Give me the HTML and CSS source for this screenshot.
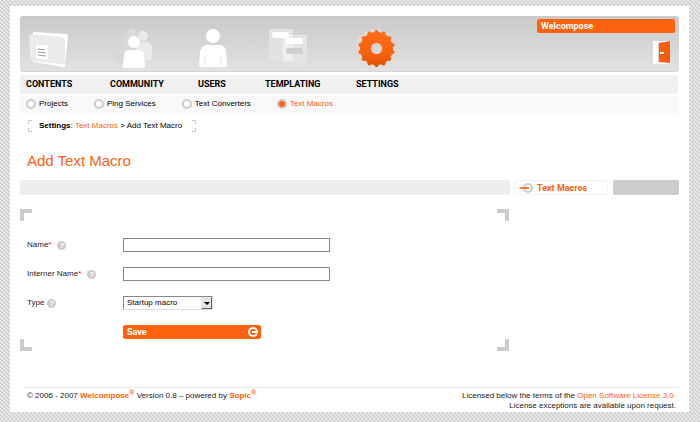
FILE: index.html
```html
<!DOCTYPE html>
<html lang="en">
<head>
<meta charset="utf-8">
<title>Welcompose – Add Text Macro</title>
<link rel="stylesheet" href="styles.css">
</head>
<body>
<div class="page">
  <header>
    <div class="banner">
      <div class="icons" aria-hidden="true">
        <svg class="icon" width="44" height="42" viewBox="0 0 44 42">
          <path d="M7 3l33 2q2 0 2 3l-3 28q0 3-3 2L7 33z" fill="#fff"/>
          <path d="M5 5l30 3q4 1 4 4v21q0 3-3 2L6 32q-2-1-2-3L3 7q0-2 2-2z" fill="#ebebeb"/>
          <path d="M10 16h12v14l-12-1z" fill="#fff"/>
          <path d="M12 20l7 1m-7 2l8 1m-8 2l8 1" stroke="#999" fill="none"/>
        </svg>
        <svg class="icon" width="44" height="42" viewBox="0 0 44 42">
          <g fill="#d8d8d8"><circle cx="14" cy="11" r="5"/><path d="M5 34V23q0-5 5-5h7v16z"/></g>
          <g fill="#dcdcdc"><circle cx="22" cy="5" r="5"/><path d="M17 10h10v9H17z"/></g>
          <g fill="#ebebeb"><circle cx="33" cy="7" r="5"/><path d="M26 31V18q1-5 5-5h5q6 0 6 7v9q0 2-3 2z"/></g>
          <g fill="#fff"><circle cx="24" cy="13" r="6"/><path d="M14 39q-2 0-1-3l1-10q1-5 5-5h10q5 0 5 5l1 10q0 3-2 3z"/></g>
        </svg>
        <svg class="icon" width="32" height="42" viewBox="0 0 32 42">
          <g fill="#fff"><ellipse cx="15" cy="7" rx="7" ry="7"/><path d="M3 38q-2 0-2-3l1-12q1-6 7-7h12q7 1 7 7l1 12q0 3-2 3z"/></g>
          <path d="M7 37V28m16 9V28" stroke="#e6e6e6" fill="none"/>
        </svg>
        <svg class="icon" width="44" height="42" viewBox="0 0 44 42">
          <rect x="4" y="0" width="24" height="32" rx="1" fill="#e2e2e2"/>
          <rect x="18" y="6" width="24" height="31" rx="1" fill="#e4e4e4"/>
          <path d="M18 6h10v26H18z" fill="#efefef"/>
          <rect x="7" y="3" width="17" height="6" rx="2" fill="#fff"/>
          <rect x="21" y="9" width="17" height="6" rx="2" fill="#fff"/>
          <rect x="21" y="19" width="17" height="6" rx="2" fill="#cfcfcf"/>
        </svg>
        <svg class="icon" width="44" height="42" viewBox="0 0 44 42">
          <defs><linearGradient id="gear" gradientUnits="userSpaceOnUse" x1="0" y1="1" x2="0" y2="38"><stop offset="0" stop-color="#ff6a1a"/><stop offset="0.600" stop-color="#fa640f"/><stop offset="1" stop-color="#dd5008"/></linearGradient></defs>
          <g fill="none" stroke="#dedede"><circle cx="18" cy="17" r="12" stroke-width="8"/><circle cx="18" cy="17" r="16" stroke-width="4" pathLength="42" stroke-dasharray="1 2"/></g>
          <g fill="none" stroke="url(#gear)">
            <circle cx="20.500" cy="19.500" r="11" stroke-width="11"/>
            <circle cx="20.500" cy="19.500" r="16.500" stroke-width="4" stroke-linecap="round" pathLength="140" stroke-dasharray="0.100 9.900" stroke-dashoffset="5" />
          </g>
        </svg>
      </div>
      <div class="account">
        <div class="project strong">Welcompose</div>
        <a class="logout" href="#" aria-label="Log out">
          <svg width="18" height="23" viewBox="0 0 18 23"><path fill="#fff" d="M0 0h17v23H0z"/><path fill="#d9d9d9" d="M5 1h1v21H5z"/><path fill="#fa5c08" d="M6 2l11-2v22L6 21z"/><path fill="#fff" d="M7 11h4v2H7z"/></svg>
        </a>
      </div>
    </div>
    <nav class="tabs strong" aria-label="Sections">
      <a href="#">CONTENTS</a><a href="#">COMMUNITY</a><a href="#">USERS</a><a href="#">TEMPLATING</a><a href="#">SETTINGS</a>
    </nav>
    <nav class="subnav" aria-label="Settings">
      <a href="#">Projects</a><a href="#">Ping Services</a><a href="#">Text Converters</a><a class="current" href="#">Text Macros</a>
    </nav>
  </header>

  <div class="crumbs corners"><strong>Settings</strong>: <a href="#">Text Macros</a> &gt; Add Text Macro</div>

  <main>
    <h1>Add Text Macro</h1>
    <div class="bar">
      <div class="bar-main"></div>
      <a class="bar-link strong" href="#">
        <svg width="13" height="11" viewBox="0 0 13 11" aria-hidden="true"><circle cx="8" cy="6" r="4" fill="none" stroke="#ccc" stroke-width="2"/><path d="M0 5h9v2H0z" fill="#ff7a33"/></svg>
        Text Macros
      </a>
      <div class="bar-end"></div>
    </div>

    <form class="corners frame">
      <div class="row">
        <div class="label"><label for="name">Name<span class="req">*</span></label><button type="button" class="help" aria-label="Help on name">?</button></div>
        <input id="name" type="text">
      </div>
      <div class="row">
        <div class="label"><label for="internal">Interner Name<span class="req">*</span></label><button type="button" class="help" aria-label="Help on internal name">?</button></div>
        <input id="internal" type="text">
      </div>
      <div class="row">
        <div class="label tight"><label for="type">Type</label><button type="button" class="help" aria-label="Help on type">?</button></div>
        <div class="select">
          <select id="type"><option>Startup macro</option></select>
          <span class="arrow" aria-hidden="true"></span>
        </div>
      </div>
      <div class="row">
        <button class="save strong" type="submit">Save
          <svg width="10" height="10" viewBox="0 0 10 10" aria-hidden="true"><circle cx="5" cy="5" r="4" fill="none" stroke="#fff" stroke-width="2"/><path d="M4 5h6" stroke="#fff" stroke-width="2"/><path d="M8 6h2v2z" fill="#ff620d"/></svg>
        </button>
      </div>
    </form>
  </main>

  <footer>
    <p>© 2006 - 2007 <a class="brand" href="#">Welcompose<sup>®</sup></a> Version 0.8 – powered by <a class="brand" href="#">Sopic<sup>®</sup></a></p>
    <p class="license">Licensed below the terms of the <a href="#">Open Software License 3.0</a>&nbsp;<br>License exceptions are available upon request.</p>
  </footer>
</div>
</body>
</html>
```

FILE: styles.css
```css
*, *::before { box-sizing: border-box; }

body {
  margin: 0;
  padding: 6px 11px 10px 10px;
  font: 8px/10px "Liberation Sans", Arial, sans-serif;
  color: #222;
  background: linear-gradient(45deg, #d2d2d2 25%, #e8e8e8 25% 50%, #d2d2d2 50% 75%, #e8e8e8 75%) 0 0 / 4px 4px;
}

a { color: #ff620d; text-decoration: none; }
p { margin: 0; }
button, input, select { font: inherit; margin: 0; padding: 0; border: 0; }

.strong { font: bold 9px/10px Roboto, "Liberation Sans", sans-serif; }

.page { padding: 10px 10px 0; background: #fff; }

/* Header */
.banner {
  display: flex;
  justify-content: space-between;
  height: 56px;
  padding: 3px 4px 0 6px;
  border-radius: 3px;
  border-bottom: 1px solid #d4d4d4;
  background: linear-gradient(#c9c9c9, #e2e2e2);
}
.icons, .tabs {
  display: grid;
  grid-template-columns: 84px 88px 67px 91px auto;
}
.icons { align-content: end; }
.icon { display: block; }
.account { display: flex; flex-direction: column; align-items: flex-end; gap: 8px; }
.project {
  width: 138px;
  padding: 2px 4px;
  border-radius: 2px;
  background: #ff620d;
  color: #fff;
}
.logout { padding-right: 4px; }
.logout svg { display: block; }

.tabs {
  margin: 3px 1px 0 0;
  padding: 4px 6px 5px;
  border-radius: 2px;
  background: #f0f0f0;
}
.tabs a { color: #000; }

.subnav {
  display: flex;
  gap: 26px;
  margin-top: 2px;
  padding: 3px 6px 4px;
  background: #f8f8f8;
}
.subnav a { display: flex; align-items: center; gap: 3px; color: #000; }
.subnav a::before {
  content: "";
  width: 10px;
  height: 10px;
  border: 2px solid #ccc;
  border-radius: 50%;
  background: #fff;
}
.subnav a.current { color: #ff620d; }
.subnav a.current::before { background: #ff620d; }

/* Boxes marked by four corner brackets */
.corners {
  --c: #ccc;
  --len: 4px;
  --w: 1px;
  background:
    linear-gradient(var(--c) 0 0) 0 0 / var(--len) var(--w),
    linear-gradient(var(--c) 0 0) 0 0 / var(--w) var(--len),
    linear-gradient(var(--c) 0 0) 100% 0 / var(--len) var(--w),
    linear-gradient(var(--c) 0 0) 100% 0 / var(--w) var(--len),
    linear-gradient(var(--c) 0 0) 0 100% / var(--len) var(--w),
    linear-gradient(var(--c) 0 0) 0 100% / var(--w) var(--len),
    linear-gradient(var(--c) 0 0) 100% 100% / var(--len) var(--w),
    linear-gradient(var(--c) 0 0) 100% 100% / var(--w) var(--len);
  background-repeat: no-repeat;
}

.crumbs {
  width: fit-content;
  margin: 7px 0 0 8px;
  padding: 1px 14px 1px 11px;
  color: #000;
}

/* Content */
h1 {
  margin: 19px 7px 10px;
  font-size: 15px;
  font-weight: normal;
  line-height: 19px;
  color: #ff620d;
}
.bar {
  display: grid;
  grid-template-columns: 1fr 93px 66px;
  gap: 5px;
  height: 15px;
}
.bar-main, .bar-end, .bar-link { border-radius: 2px; }
.bar-main { background: #eee; }
.bar-end { background: #ccc; }
.bar-link {
  display: flex;
  align-items: center;
  gap: 4px;
  padding-left: 4px;
  border: 1px solid #f2f2f2;
}

.frame {
  --len: 12px;
  --w: 4px;
  display: grid;
  gap: 15px;
  margin: 14px 170px 0 0;
  padding: 29px 7px 12px;
}
.row { display: grid; grid-template-columns: 96px 1fr; align-items: center; }
.label { display: flex; align-items: center; gap: 6px; }
.label.tight { gap: 3px; }
.req { color: #f00; }
.help {
  width: 9px;
  height: 9px;
  border-radius: 50%;
  background: #ccc;
  color: #fff;
  font-weight: bold;
  line-height: 9px;
  text-align: center;
}
input {
  width: 207px;
  height: 14px;
  padding: 0 3px;
  border: 1px solid #888;
  background: #fff;
}
.select {
  display: flex;
  align-items: stretch;
  width: 90px;
  height: 14px;
  border: 1px solid;
  border-color: #888 #ddd #ddd #888;
}
select {
  flex: 1;
  padding-left: 3px;
  appearance: none;
  background: #fff;
  color: #000;
}
.arrow {
  display: grid;
  place-items: center;
  width: 11px;
  border: 1px solid;
  border-color: #eee #666 #666 #eee;
  background: #e4e4e4;
  pointer-events: none;
}
.arrow::before {
  content: "";
  border: 3px solid transparent;
  border-top-color: #000;
  border-bottom: 0;
}
.save {
  grid-column: 2;
  display: flex;
  align-items: center;
  justify-content: space-between;
  width: 138px;
  height: 14px;
  padding: 0 3px 0 4px;
  border-radius: 2px;
  background: #ff620d;
  color: #fff;
}

/* Footer */
footer {
  display: flex;
  justify-content: space-between;
  margin: 36px 0 0 4px;
  padding: 3px 3px 1px 3px;
  border-top: 1px solid #e8e8e8;
}
.license { text-align: right; }
.brand { font-weight: bold; }
sup { font-size: 7px; line-height: 0; vertical-align: 3px; }
```
